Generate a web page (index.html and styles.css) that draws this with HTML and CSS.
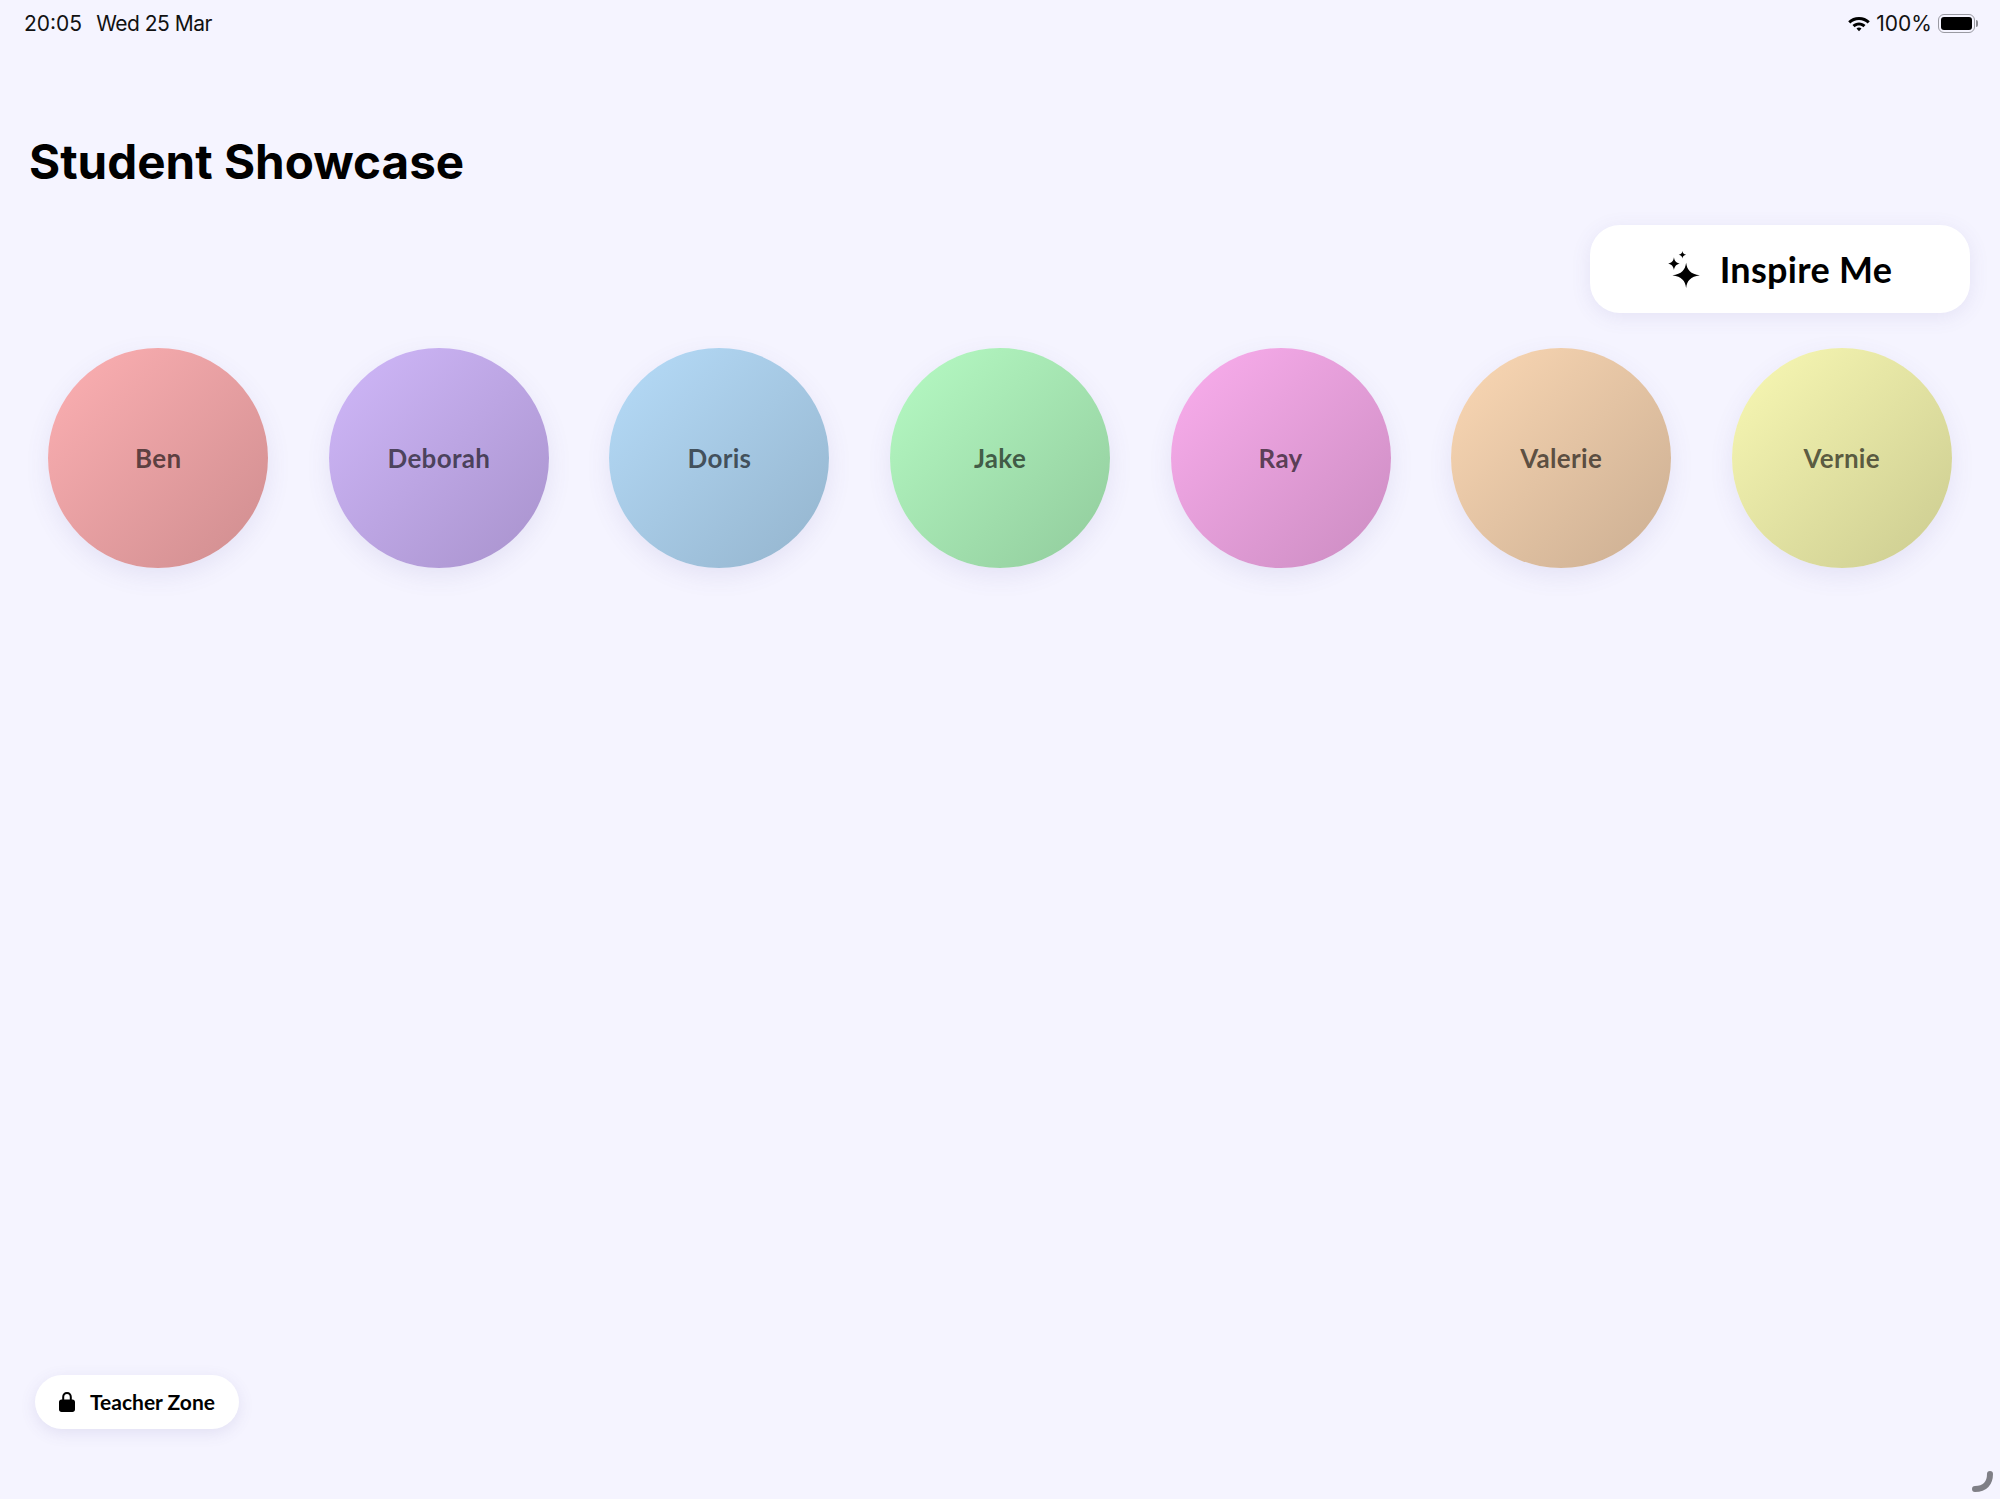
FILE: index.html
```html
<!DOCTYPE html>
<html lang="en">
<head>
  <meta charset="UTF-8" />
  <title>Student Showcase</title>
  <link rel="stylesheet" href="styles.css">
</head>
<body>

  <div class="status-bar">
    <div class="status-left">
      <span>20:05</span>
      <span class="date">Wed 25 Mar</span>
    </div>
    <div class="status-right">
      <svg class="wifi" viewBox="0 0 24 18" width="24" height="18">
        <path d="M12 3C7.800 3 4 4.600 1.200 7.200l2.100 2.300C5.600 7.400 8.600 6.100 12 6.100s6.400 1.300 8.700 3.400l2.100-2.300C20 4.600 16.200 3 12 3z"/>
        <path d="M12 8.400c-2.500 0-4.800 1-6.500 2.500l2.100 2.300c1.200-1.100 2.700-1.700 4.400-1.700s3.200.6 4.400 1.700l2.100-2.300C16.800 9.400 14.500 8.400 12 8.400z"/>
        <path d="M12 13.500c-1 0-1.900.4-2.500 1L12 17.200l2.500-2.700c-.6-.6-1.500-1-2.500-1z"/>
      </svg>
      <span>100%</span>
      <div class="battery">
        <div class="battery-fill"></div>
      </div>
      <div class="battery-cap"></div>
    </div>
  </div>

  <h1 class="title">Student Showcase</h1>

  <div class="actions">
    <button class="inspire-btn">
      <svg viewBox="0 0 30 35" width="32" height="37">
        <path d="M17 11C18 18 21 21.500 30 23 21 24.500 18 28 17 35 16 28 13 24.500 4 23 13 21.500 16 18 17 11z"/>
        <path d="M5.500 6C6 9.500 7.500 11.300 11 12 7.500 12.700 6 14.500 5.500 18 5 14.500 3.500 12.700 0 12 3.500 11.300 5 9.500 5.500 6z"/>
        <path d="M13.500 0C13.800 2 14.800 3.200 17 3.500 14.800 3.800 13.800 5 13.500 7 13.200 5 12.200 3.800 10 3.500 12.200 3.200 13.200 2 13.500 0z"/>
      </svg>
      <span>Inspire Me</span>
    </button>
  </div>

  <div class="students">
    <div class="student"><div class="bubble ben">Ben</div></div>
    <div class="student"><div class="bubble deborah">Deborah</div></div>
    <div class="student"><div class="bubble doris">Doris</div></div>
    <div class="student"><div class="bubble jake">Jake</div></div>
    <div class="student"><div class="bubble ray">Ray</div></div>
    <div class="student"><div class="bubble valerie">Valerie</div></div>
    <div class="student"><div class="bubble vernie">Vernie</div></div>
  </div>

  <button class="teacher-btn">
    <svg viewBox="0 0 16 20" width="16" height="20">
      <path d="M8 0C5 0 3.200 2 3.200 5v2.500H2.500C1.100 7.500 0 8.500 0 10v7.500C0 19 1.100 20 2.500 20h11c1.400 0 2.500-1 2.500-2.500V10c0-1.500-1.100-2.500-2.500-2.500h-.7V5C12.800 2 11 0 8 0zM5.200 7.500V5c0-1.900 1.100-3.100 2.800-3.100s2.800 1.200 2.800 3.100v2.500z"/>
    </svg>
    <span class="teacher-label">Teacher Zone</span>
  </button>

  <svg class="spinner" viewBox="0 0 30 30" width="30" height="30">
    <path d="M24 7c0 9-5 15-15 15"/>
  </svg>

</body>
</html>
```
FILE: styles.css
```css
html, body {
  margin: 0;
  height: 100%;
}

body {
  position: relative;
  width: 2000px;
  height: 1499px;
  overflow: hidden;
  display: flex;
  flex-direction: column;
  background: #f5f4ff;
  color: #000;
  font-family: 'Lato', sans-serif;
}

.status-bar {
  display: flex;
  justify-content: space-between;
  align-items: center;
  height: 46px;
  padding: 0 22px 0 24px;
  font-family: 'Inter', sans-serif;
  font-size: 21px;
  color: #111;
}

.status-left {
  display: flex;
  gap: 14px;
}

.date {
  letter-spacing: -0.5px;
}

.status-right {
  display: flex;
  align-items: center;
}

.wifi {
  margin-right: 5px;
}

.battery {
  box-sizing: border-box;
  width: 37px;
  height: 19px;
  margin-left: 6px;
  padding: 2px;
  border: 1.500px solid #9a9aa2;
  border-radius: 6px;
}

.battery-fill {
  height: 100%;
  background: #000;
  border-radius: 3px;
}

.battery-cap {
  width: 2px;
  height: 7px;
  margin-left: 1px;
  background: #8a8a92;
  border-radius: 0 2px 2px 0;
}

.title {
  margin: 86px 0 0 29px;
  font-family: 'Inter', sans-serif;
  font-size: 47.6px;
  font-weight: 700;
  line-height: 60px;
}

.actions {
  display: flex;
  justify-content: flex-end;
  margin-top: 33px;
  padding-right: 30px;
}

.inspire-btn {
  display: flex;
  align-items: center;
  justify-content: center;
  gap: 20px;
  width: 380px;
  height: 88px;
  border: none;
  border-radius: 30px;
  background: #fff;
  box-shadow: 0 4px 20px rgba(90, 80, 160, 0.1);
  font-family: inherit;
  font-size: 36px;
  font-weight: 700;
  letter-spacing: 0.3px;
  color: #000;
}

.students {
  display: grid;
  grid-template-columns: repeat(7, 1fr);
  margin-top: 35px;
  padding: 0 18px;
}

.student {
  display: flex;
  justify-content: center;
}

.bubble {
  display: flex;
  align-items: center;
  justify-content: center;
  width: 220px;
  height: 220px;
  border-radius: 50%;
  box-shadow: 0 8px 24px rgba(90, 80, 160, 0.1);
  font-size: 26px;
  font-weight: 700;
  letter-spacing: 0.3px;
  color: rgba(0, 0, 0, 0.62);
}

.ben { background: linear-gradient(135deg, #fdb0b3, #cf8d8f); }
.deborah { background: linear-gradient(135deg, #d0b8fa, #a892cc); }
.doris { background: linear-gradient(135deg, #b6dcf9, #94b4cd); }
.jake { background: linear-gradient(135deg, #b6fbc4, #91cb9c); }
.ray { background: linear-gradient(135deg, #fbaeee, #cb8cc1); }
.valerie { background: linear-gradient(135deg, #fbd8b4, #cbae92); }
.vernie { background: linear-gradient(135deg, #f9f9b4, #cbcb90); }

.teacher-btn {
  display: flex;
  align-items: center;
  justify-content: center;
  gap: 15px;
  align-self: flex-start;
  width: 204px;
  height: 54px;
  margin: auto 0 70px 35px;
  border: none;
  border-radius: 27px;
  background: #fff;
  box-shadow: 0 4px 16px rgba(90, 80, 160, 0.12);
  font-family: inherit;
  font-size: 21px;
  font-weight: 700;
  color: #000;
}

.teacher-label {
  padding-bottom: 2px;
}

.spinner {
  position: absolute;
  right: 4px;
  bottom: 2px;
  fill: none;
  stroke: #7f7f86;
  stroke-width: 6;
  stroke-linecap: round;
}
```
